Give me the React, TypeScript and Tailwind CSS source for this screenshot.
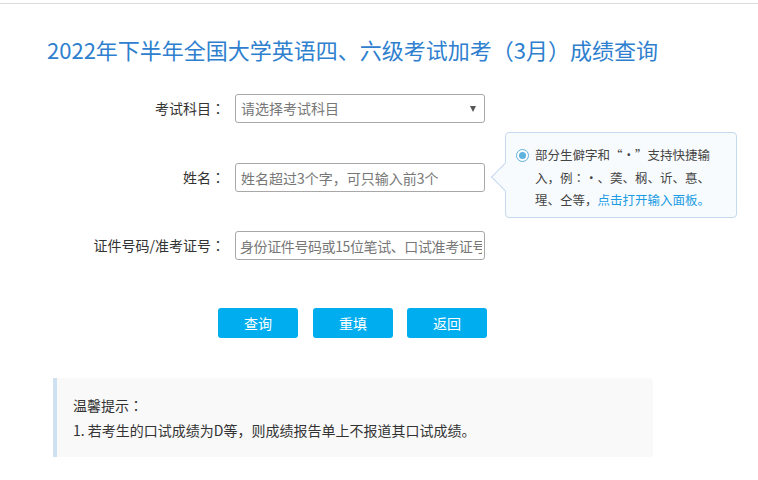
const Colon = () => <span className="font-['Noto_Sans_CJK_TC',sans-serif]">：</span>;

export default function App() {
  return (
    <div className="min-h-screen bg-white font-['Microsoft_YaHei','Noto_Sans_CJK_SC',sans-serif] text-[#333]">
      <div className="mt-[3px] border-t border-[#dcdcdc] pt-[30px]">
        <h1 className="pl-[47px] text-[22px] leading-[30px] text-[#2e80cf]">
          2022年下半年全国大学英语四、六级考试加考（3月）成绩查询
        </h1>

        {/* form */}
        <div className="mt-[30px] flex flex-col">
          <div className="flex items-center h-[29px]">
            <div className="w-[225px] text-right text-[14px]">考试科目<Colon /></div>
            <div className="ml-[10px] w-[250px] h-[29px] border border-[#a8a8a8] rounded-[3px] pl-[5px] pr-[8px] flex items-center justify-between text-[14px] text-[#777]">
              <span>请选择考试科目</span>
              <span className="w-0 h-0 border-l-[3.5px] border-r-[3.5px] border-t-[6px] border-l-transparent border-r-transparent border-t-[#555]" />
            </div>
          </div>

          <div className="mt-[40px] flex items-center h-[29px]">
            <div className="w-[225px] text-right text-[14px]">姓名<Colon /></div>
            <div className="relative ml-[10px]">
              <input
                className="block w-[250px] h-[29px] border border-[#a8a8a8] rounded-[3px] px-[5px] text-[14px] outline-none placeholder:text-[#777]"
                placeholder="姓名超过3个字，可只输入前3个"
              />
              <div className="absolute left-[270px] top-[-31px] w-[232px] h-[86px] border border-[#c6d9ee] rounded-[4px] bg-[#f8fbfe]">
                <div className="absolute left-[-11px] top-[34px] w-[20px] h-[20px] rotate-45 border-l border-b border-[#c6d9ee] bg-[#f8fbfe]" />
                <div className="relative flex pl-[10px] pt-[11px] gap-[6px] text-[12.5px] leading-[22.5px] text-[#444]">
                  <div className="mt-[5px] w-[13px] h-[13px] shrink-0 rounded-full border-[1.5px] border-[#5fb1de] bg-white flex items-center justify-center">
                    <div className="w-[7px] h-[7px] rounded-full bg-[#5fb1de]" />
                  </div>
                  <div className="whitespace-nowrap">
                    部分生僻字和“·”支持快捷输
                    <br />
                    入，例<Colon />·、䶮、㭎、䜣、惪、
                    <br />
                    瑆、仝等，<span className="text-[#1a9be4] cursor-pointer">点击打开输入面板。</span>
                  </div>
                </div>
              </div>
            </div>
          </div>

          <div className="mt-[39px] flex items-center h-[29px]">
            <div className="w-[225px] text-right text-[14px]">证件号码/准考证号<Colon /></div>
            <input
              className="ml-[10px] block w-[250px] h-[29px] border border-[#a8a8a8] rounded-[3px] pl-[4px] pr-[2px] text-[14px] tracking-[-0.4px] outline-none placeholder:text-[#777]"
              placeholder="身份证件号码或15位笔试、口试准考证号"
            />
          </div>
        </div>

        {/* buttons */}
        <div className="mt-[48px] flex pl-[218px]">
          <button className="w-[80px] h-[30px] rounded-[3px] bg-[#00aeef] text-white text-[14px]">查询</button>
          <button className="ml-[15px] w-[80px] h-[30px] rounded-[3px] bg-[#00aeef] text-white text-[14px]">重填</button>
          <button className="ml-[14px] w-[80px] h-[30px] rounded-[3px] bg-[#00aeef] text-white text-[14px]">返回</button>
        </div>

        {/* notice */}
        <div className="mt-[40px] ml-[53px] w-[600px] h-[79px] border-l-4 border-[#cfe0f1] rounded-r-[3px] bg-[#f9f9f9] pl-[16px] pt-[15px] text-[14px] leading-[25px] text-[#333]">
          <p>温馨提示<Colon /></p>
          <p>1. 若考生的口试成绩为D等，则成绩报告单上不报道其口试成绩。</p>
        </div>
      </div>
    </div>
  );
}
